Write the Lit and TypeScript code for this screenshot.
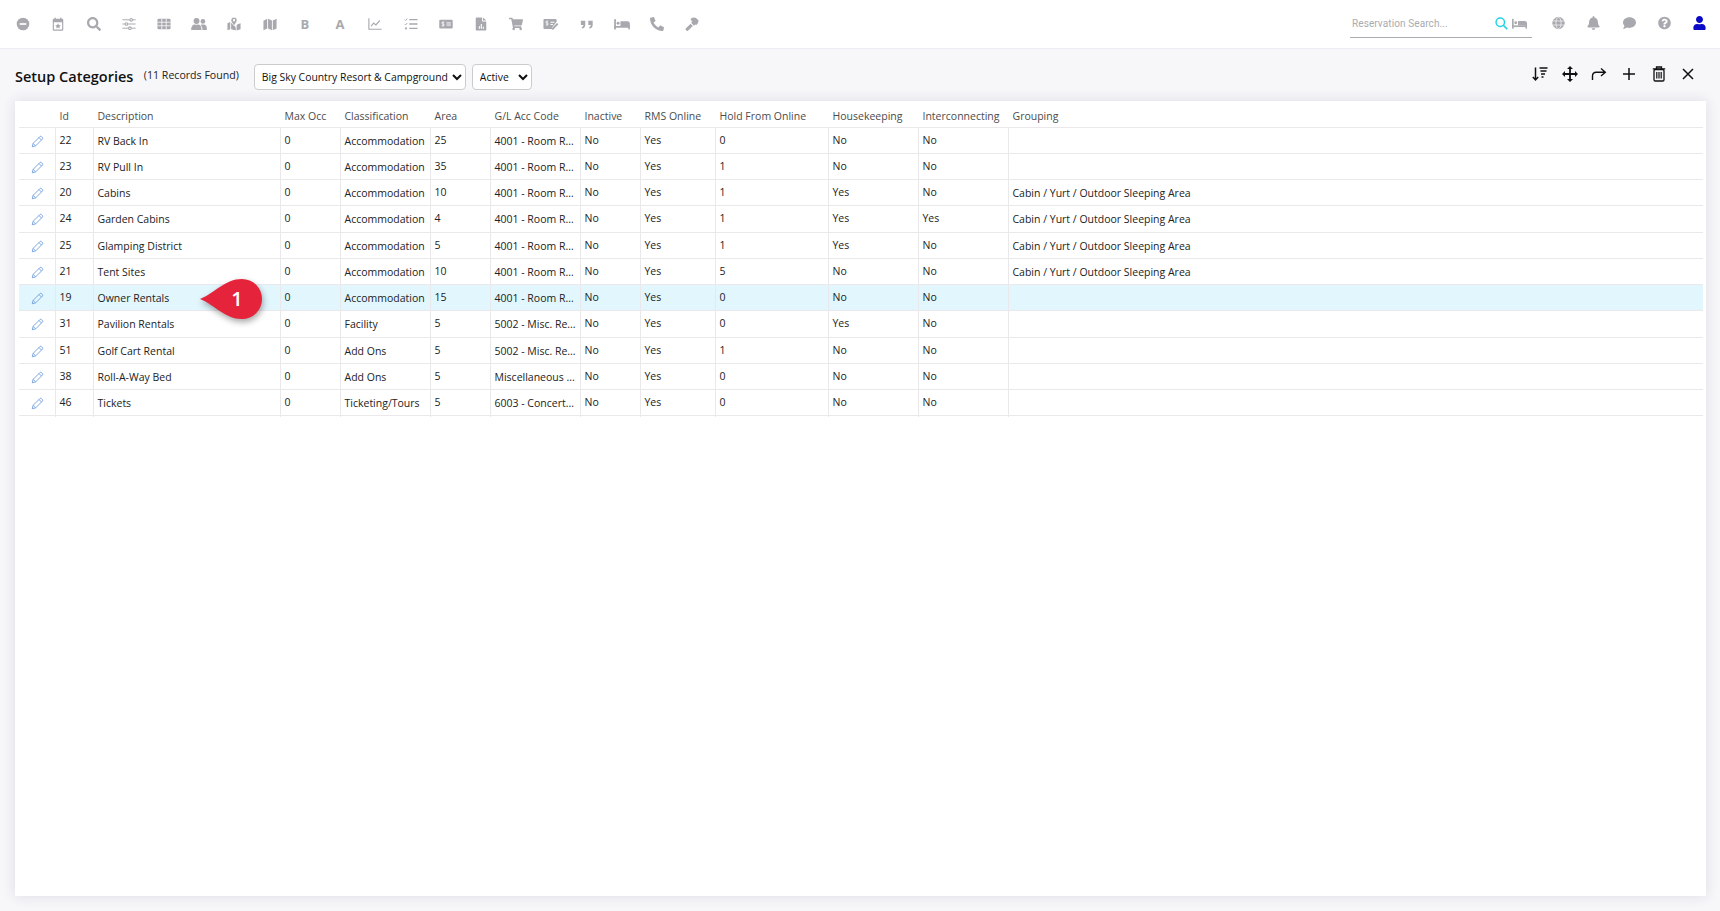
import { LitElement, html, css, svg } from "lit";
import { customElement } from "lit/decorators.js";

const F = (d: string, vb = "0 0 512 512") => svg`<svg viewBox=${vb} class="ic"><path fill="currentColor" d=${d}></path></svg>`;
const G = (inner: unknown) => svg`<svg viewBox="0 0 16 16" class="ic">${inner}</svg>`;

const P = {
  search: "M505 442.7L405.3 343c-4.5-4.5-10.6-7-17-7H372c27.6-35.3 44-79.7 44-128C416 93.1 322.9 0 208 0S0 93.1 0 208s93.1 208 208 208c48.3 0 92.7-16.4 128-44v16.3c0 6.4 2.5 12.5 7 17l99.7 99.7c9.4 9.4 24.6 9.4 33.9 0l28.3-28.3c9.4-9.4 9.4-24.6.1-34zM208 336c-70.7 0-128-57.2-128-128 0-70.7 57.2-128 128-128 70.7 0 128 57.2 128 128 0 70.7-57.2 128-128 128z",
  user: "M224 256c70.7 0 128-57.3 128-128S294.7 0 224 0 96 57.3 96 128s57.3 128 128 128zm89.6 32h-16.7c-22.2 10.2-46.9 16-72.9 16s-50.6-5.8-72.9-16h-16.7C60.2 288 0 348.2 0 422.4V464c0 26.5 21.5 48 48 48h352c26.5 0 48-21.5 48-48v-41.6c0-74.2-60.2-134.4-134.4-134.4z",
  bell: "M224 512c35.32 0 63.97-28.65 63.97-64H160.03c0 35.35 28.65 64 63.97 64zm215.39-149.71c-19.32-20.76-55.47-51.99-55.47-154.29 0-77.7-54.48-139.9-127.94-155.16V32c0-17.67-14.32-32-31.98-32s-31.98 14.33-31.98 32v20.84C118.56 68.1 64.08 130.3 64.08 208c0 102.3-36.15 133.53-55.47 154.29-6 6.45-8.66 14.16-8.61 21.71.11 16.4 12.98 32 32.1 32h383.8c19.12 0 32-15.6 32.1-32 .05-7.55-2.61-15.27-8.61-21.71z",
  comment: "M256 32C114.6 32 0 125.1 0 240c0 49.6 21.4 95 57 130.7C44.5 421.1 2.7 466 2.2 466.5c-2.2 2.3-2.8 5.7-1.5 8.7S4.8 480 8 480c66.3 0 116-31.8 140.6-51.4 32.7 12.3 69 19.4 107.4 19.4 141.4 0 256-93.1 256-208S397.4 32 256 32z",
  question: "M504 256c0 136.997-111.043 248-248 248S8 392.997 8 256C8 119.083 119.043 8 256 8s248 111.083 248 248zM262.655 90c-54.497 0-89.255 22.957-116.549 63.758-3.536 5.286-2.353 12.415 2.715 16.258l34.699 26.31c5.205 3.947 12.621 3.008 16.665-2.122 17.864-22.658 30.113-35.797 57.303-35.797 20.429 0 45.698 13.148 45.698 32.958 0 14.976-12.363 22.667-32.534 33.976C247.128 238.528 216 254.941 216 296v4c0 6.627 5.373 12 12 12h56c6.627 0 12-5.373 12-12v-1.333c0-28.462 83.186-29.647 83.186-106.667 0-58.002-60.165-102-116.531-102zM256 338c-25.365 0-46 20.635-46 46 0 25.364 20.635 46 46 46s46-20.636 46-46c0-25.365-20.635-46-46-46z",
  cart: "M528.12 301.319l47.273-208C578.806 78.301 567.391 64 551.99 64H159.208l-9.166-44.81C147.758 8.021 137.93 0 126.529 0H24C10.745 0 0 10.745 0 24v16c0 13.255 10.745 24 24 24h69.883l70.248 343.435C147.325 417.1 136 435.222 136 456c0 30.928 25.072 56 56 56s56-25.072 56-56c0-15.674-6.447-29.835-16.824-40h209.647C430.447 426.165 424 440.326 424 456c0 30.928 25.072 56 56 56s56-25.072 56-56c0-22.172-12.888-41.332-31.579-50.405l5.517-24.276c3.413-15.018-8.002-29.319-23.403-29.319H218.117l-6.545-32h293.145c11.206 0 20.92-7.754 23.403-18.681z",
  phone: "M493.4 24.6l-104-24c-11.3-2.6-22.9 3.3-27.5 13.9l-48 112c-4.2 9.8-1.4 21.3 6.9 28l60.6 49.6c-36 76.7-98.9 140.5-177.2 177.2l-49.6-60.6c-6.8-8.3-18.2-11.1-28-6.9l-112 48C3.9 366.5-2 378.1.6 389.4l24 104C27.1 504.2 36.7 512 48 512c256.1 0 464-207.5 464-464 0-11.2-7.7-20.9-18.6-23.4z",
};

const bed = G(svg`<g fill="currentColor"><rect x="0" y="3" width="1.8" height="10.5" rx=".4"/><rect x="0" y="10" width="16" height="1.8"/><rect x="14.4" y="9" width="1.6" height="4.5" rx=".4"/><circle cx="4" cy="7.2" r="1.5"/><path d="M6.4 5.2h7.2a2.4 2.4 0 0 1 2.4 2.4V10H6.4z"/></g>`);

const navIcons: unknown[] = [
  G(svg`<circle cx="8" cy="8" r="7.2" fill="currentColor"/><path d="M4.2 8h7.6" stroke="#fff" stroke-width="1.9"/><path d="M8 6.6v2.800" stroke="#fff" stroke-width=".7" opacity=".6"/>`),
  G(svg`<g fill="currentColor"><rect x="4" y=".5" width="1.5" height="3" rx=".5"/><rect x="10.5" y=".5" width="1.5" height="3" rx=".5"/><path fill-rule="evenodd" d="M3.2 2h9.600a1.200 1.200 0 0 1 1.200 1.200v11.400a1.200 1.200 0 0 1-1.200 1.200H3.200a1.200 1.200 0 0 1-1.200-1.200V3.200A1.200 1.200 0 0 1 3.200 2zM3.300 6v8.400h9.400V6z"/><path d="M8 7.200l1 2 2.100.3-1.500 1.500.4 2.100L8 12.100l-2 1 .4-2.100-1.500-1.500 2.100-.3z"/></g>`),
  F(P.search),
  G(svg`<g stroke="currentColor" stroke-width="1.100" fill="none"><path d="M.5 3.200h15M.5 8h15M.5 12.800h15"/><g fill="#fff" stroke-width="1.200"><circle cx="10.500" cy="3.200" r="1.500"/><circle cx="5" cy="8" r="1.500"/><circle cx="9" cy="12.800" r="1.500"/></g></g>`),
  G(svg`<rect x=".5" y="2" width="15" height="12" rx="1.200" fill="currentColor"/><path d="M.5 6h15M.5 10h15M5.500 2v12M10.500 2v12" stroke="#fff" stroke-width=".9"/>`),
  svg`<svg viewBox="0 0 16 16" class="ic" style="overflow:visible;transform:scale(1.12)"><g fill="currentColor"><circle cx="5.500" cy="5" r="3"/><circle cx="12" cy="5.400" r="2.400"/><path d="M0 13.200c0-3 2-4.700 3.500-4.700h.6c.6.300 1.800.300 2.600 0h.5c1.700 0 3.300 1.700 3.300 4.700v.8H0z"/><path d="M11.500 14c0-2-.6-3.800-1.900-5 .5-.4 1-.5 1.400-.5.500.200 1.500.200 2 0 1.700 0 3 1.600 3 3.800V14z"/></g></svg>`,
  G(svg`<g fill="currentColor"><path d="M.5 7l3.200-1.300V14L.5 15.200zM11 9.500l1.200-1.300 3.300-1.200V14l-4.500 1.400zM4.700 6.500v7.600l5.300 1.300V12L7.500 8.500z"/></g><path d="M8 .3c-2 0-3.500 1.500-3.500 3.400 0 1.700 2.300 4.700 3.500 6.100 1.200-1.400 3.500-4.400 3.500-6.100C11.500 1.800 10 .3 8 .3z" fill="currentColor" stroke="#fff" stroke-width=".8"/><circle cx="8" cy="3.700" r="1.300" fill="#fff"/>`),
  G(svg`<path fill="currentColor" d="M.5 4.200L4.800 2v11L.5 15zM5.800 2l4.400 2v11l-4.400-2zM11.200 4L15.500 2v11L11.200 15z"/>`),
  "B",
  "A",
  G(svg`<path d="M1 1.500V14h14.500" fill="none" stroke="currentColor" stroke-width="1.300"/><path d="M3.500 10.500l3-3.500 2.500 2 4.500-5" fill="none" stroke="currentColor" stroke-width="1.300"/>`),
  G(svg`<g stroke="currentColor" fill="none"><path d="M6 3h9.500M6 8h9.500M6 13h9.500" stroke-width="1.600"/><path d="M.8 3l1 1 2-2.200M.8 8l1 1 2-2.200" stroke-width="1.100"/></g><circle cx="2.300" cy="13" r="1.200" fill="currentColor"/>`),
  G(svg`<rect x=".3" y="3" width="15.400" height="10" rx="1.400" fill="currentColor"/><path d="M8.500 6.800h5M8.500 9.200h5" stroke="#fff" stroke-width="1.100"/><path d="M6.100 6H4.200a1 1 0 0 0 0 2h.8a1 1 0 0 1 0 2H3M4.600 5v6" stroke="#fff" stroke-width=".8" fill="none"/>`),
  G(svg`<path fill="currentColor" fill-rule="evenodd" d="M3 .5h6.300V5H14v9.500a1 1 0 0 1-1 1H3a1 1 0 0 1-1-1v-13a1 1 0 0 1 1-1zM10.300.5L14 4h-3.700zM5.500 10.500v3h1.300v-3zM7.700 8v5.500H9V8zM10 11v2.500h1.300V11z"/>`),
  F(P.cart, "0 0 576 512"),
  svg`<svg viewBox="0 0 16 16" class="ic" style="overflow:visible;transform:scale(1.12)"><path fill="currentColor" d="M1.300 2.800h11.400a1 1 0 0 1 1 1v2L9 11.500v1.700H1.300a1 1 0 0 1-1-1V3.800a1 1 0 0 1 1-1z"/><path d="M7.500 6.200h4M7.500 8.500h2.500" stroke="#fff" stroke-width="1"/><path d="M5 5.300H3.600a.9.900 0 0 0 0 1.800h.7a.9.900 0 0 1 0 1.800H2.800M4 4.500v5.200" stroke="#fff" stroke-width=".7" fill="none"/><path d="M10.500 13.500l5-5.200-1.400-1.400-5 5.200-.3 1.700z" fill="currentColor"/></svg>`,
  G(svg`<path fill="currentColor" d="M1 4.200h5v4.800c0 2.200-1.500 3.800-3.600 4l-.4-1.700c1.200-.2 1.900-.9 1.900-2.100H1zM9.500 4.200h5v4.800c0 2.200-1.500 3.800-3.600 4l-.4-1.700c1.200-.2 1.900-.9 1.900-2.100h-2.900z"/>`),
  svg`<svg viewBox="0 0 16 16" class="ic" style="overflow:visible;transform:scale(1.12)"><g fill="currentColor"><rect x="0" y="3" width="1.800" height="10.500" rx=".4"/><rect x="0" y="10" width="16" height="1.800"/><rect x="14.400" y="9" width="1.600" height="4.500" rx=".4"/><circle cx="4" cy="7.200" r="1.500"/><path d="M6.400 5.200h7.200a2.400 2.400 0 0 1 2.400 2.400V10H6.400z"/></g></svg>`,
  svg`<svg viewBox="0 0 512 512" class="ic" style="transform:scaleX(-1)"><path fill="currentColor" d=${P.phone}></path></svg>`,
  G(svg`<path fill="currentColor" d="M8.500.8c1.700-.5 3.500-.2 4.800 1l2.500 2.600-.9 1 .3 1.300-2.300 2.300-1.300-.3-1.300 1.200L7 6.700 8.200 5.500l-.7-1.200-1.400-2zM6.400 7.800l2.500 2.500-5.600 5.300a1 1 0 0 1-1.400 0l-1-1a1 1 0 0 1 0-1.400z"/>`),
];

const rows = [
  ["22", "RV Back In", "Accommodation", "25", "4001 - Room R...", "0", "No", "No", ""],
  ["23", "RV Pull In", "Accommodation", "35", "4001 - Room R...", "1", "No", "No", ""],
  ["20", "Cabins", "Accommodation", "10", "4001 - Room R...", "1", "Yes", "No", "Cabin / Yurt / Outdoor Sleeping Area"],
  ["24", "Garden Cabins", "Accommodation", "4", "4001 - Room R...", "1", "Yes", "Yes", "Cabin / Yurt / Outdoor Sleeping Area"],
  ["25", "Glamping District", "Accommodation", "5", "4001 - Room R...", "1", "Yes", "No", "Cabin / Yurt / Outdoor Sleeping Area"],
  ["21", "Tent Sites", "Accommodation", "10", "4001 - Room R...", "5", "No", "No", "Cabin / Yurt / Outdoor Sleeping Area"],
  ["19", "Owner Rentals", "Accommodation", "15", "4001 - Room R...", "0", "No", "No", ""],
  ["31", "Pavilion Rentals", "Facility", "5", "5002 - Misc. Re...", "0", "Yes", "No", ""],
  ["51", "Golf Cart Rental", "Add Ons", "5", "5002 - Misc. Re...", "1", "No", "No", ""],
  ["38", "Roll-A-Way Bed", "Add Ons", "5", "Miscellaneous ...", "0", "No", "No", ""],
  ["46", "Tickets", "Ticketing/Tours", "5", "6003 - Concert...", "0", "No", "No", ""],
];
const heads = ["", "Id", "Description", "Max Occ", "Classification", "Area", "G/L Acc Code", "Inactive", "RMS Online", "Hold From Online", "Housekeeping", "Interconnecting", "Grouping"];

@customElement("app-root")
export class AppRoot extends LitElement {
  static styles = css`
    :host { display: flex; flex-direction: column; min-height: 100vh; background: #f7f7fa; font-family: "Open Sans", sans-serif; color: #222; }
    .ic { display: block; width: 100%; height: 100%; }
    .top { height: 48px; flex: none; background: #fff; border-bottom: 1px solid #ecedf4; box-sizing: content-box; display: flex; align-items: center; padding: 0 3px 0 5.5px; }
    .nav { display: flex; align-items: center; }
    .ni { width: 35.22px; display: flex; justify-content: center; align-items: center; color: #a7a9ae; height: 16px; }
    .ni span { display: block; width: 14px; height: 14px; }
    .ni b { font: 700 13px "Open Sans", sans-serif; line-height: 16px; }
    .search { margin-left: auto; width: 182px; height: 26px; box-sizing: border-box; margin-top: 1px; border-bottom: 1px solid #a9abaf; display: flex; align-items: center; padding: 0 5px 2px 1.5px; color: #a9abaf; font: 10px Roboto, sans-serif; }
    .search .ph { flex: 1; letter-spacing: .1px; }
    .search .s { width: 13px; height: 13px; color: #22d3e6; margin-right: 4px; }
    .search .b { width: 15px; height: 15px; color: #a9abaf; }
    .right { display: flex; margin-left: 8.6px; }
    .ri { width: 35.2px; height: 16px; display: flex; justify-content: center; color: #a7a9ae; }
    .ri span { display: block; width: 13px; height: 14px; }
    .ri.u { color: #0a0ac8; }
    .bar { flex: none; height: 52px; display: flex; align-items: center; padding: 0 17px 0 15px; }
    h1 { margin: 2px 0 0; font-size: 14.5px; font-weight: 600; color: #111; white-space: nowrap; }
    .count { font-size: 10.6px; margin-left: 10.5px; margin-top: -1px; white-space: nowrap; color: #222; }
    select { font: 10.4px "Open Sans", sans-serif; color: #111; background: #fff; border: 1px solid #ccc; border-radius: 4px; height: 26px; padding: 0 0 0 3px; margin: 4px 0 0; box-sizing: border-box; }
    .s1 { width: 212px; margin-left: 15px; }
    .s2 { width: 60.5px; margin-left: 6px; }
    .tools { margin-left: auto; display: flex; color: #111; margin-top: -3px; }
    .tools span { width: 29.6px; height: 16px; display: flex; justify-content: center; }
    .tools svg { width: 16px; height: 16px; }
    .card { flex: 1; background: #fff; margin: 0 14px 15px 15px; box-shadow: 0 0 12px rgba(60, 60, 90, .14); padding: 0 3px 0 4px; }
    .row { display: grid; grid-template-columns: 37px 38px 187px 60px 90px 60px 90px 60px 75px 113px 90px 90px 1fr; height: 26.25px; box-sizing: border-box; border-bottom: 1px solid #eae8ea; position: relative; font-size: 10.5px; align-items: stretch; }
    .hd { height: 26.6px; }
    .hd .c { border-right: 0; line-height: 31px; font-size: 10.5px; font-weight: 500; color: #4c4c4c; }
    .c { border-right: 1px solid #eae8ea; padding: 0 3px 0 3.5px; white-space: nowrap; line-height: 25px; color: #222; box-sizing: border-box; min-width: 0; }
    .c.t { line-height: 27px; }
    .c.last { border-right: 0; }
    .row.on { background: #e1f7fd; }
    .edit { padding: 0; display: flex; align-items: center; justify-content: center; color: #6f9ddb; }
    .edit svg { width: 13px; height: 13px; }
    .pin { position: absolute; left: 181px; top: -9px; width: 66px; height: 46px; pointer-events: none; }
    .pin svg { display: block; width: 100%; height: 100%; overflow: visible; filter: drop-shadow(1px 3px 3px rgba(0,0,0,.35)); }
    .pin span { position: absolute; left: 29px; top: 7px; width: 16px; text-align: center; color: #fff; font: 600 20px/32px "Open Sans", sans-serif; }
  `;

  render() {
    const st = (s: string) => html`<div class="c">${s}</div>`;
    const tx = (s: string, l = "") => html`<div class="c t ${l}">${s}</div>`;
    return html`
      <div class="top">
        <div class="nav">
          ${navIcons.map((ic) => typeof ic === "string"
            ? html`<div class="ni"><b>${ic}</b></div>`
            : html`<div class="ni"><span>${ic}</span></div>`)}
        </div>
        <div class="search">
          <span class="ph">Reservation Search...</span>
          <span class="s">${svg`<svg viewBox="0 0 16 16" class="ic"><circle cx="6.500" cy="6.500" r="5.200" fill="none" stroke="currentColor" stroke-width="1.800"/><path d="M10.500 10.500l4.500 4.500" stroke="currentColor" stroke-width="2"/></svg>`}</span>
          <span class="b">${bed}</span>
        </div>
        <div class="right">
          <div class="ri"><span>${G(svg`<g fill="none" stroke="currentColor" stroke-width="1.200"><circle cx="8" cy="8" r="7" fill="currentColor"/><g stroke="#fff" stroke-width=".8"><ellipse cx="8" cy="8" rx="3.200" ry="7"/><path d="M1 5.500h14M1 10.500h14"/></g></g>`)}</span></div>
          <div class="ri"><span>${F(P.bell, "0 0 448 512")}</span></div>
          <div class="ri"><span>${F(P.comment)}</span></div>
          <div class="ri"><span>${F(P.question)}</span></div>
          <div class="ri u"><span>${F(P.user, "0 0 448 512")}</span></div>
        </div>
      </div>
      <div class="bar">
        <h1>Setup Categories</h1>
        <span class="count">(11 Records Found)</span>
        <select class="s1"><option>Big Sky Country Resort &amp; Campground</option></select>
        <select class="s2"><option>Active</option></select>
        <div class="tools">
          <span>${G(svg`<g fill="none" stroke="currentColor"><path d="M3.500 1.500v12.500M.8 11l2.700 3 2.700-3" stroke-width="1.500"/><path d="M7.500 2h8M8.500 5h6M9 8h4M9.500 11h2" stroke-width="1.400"/></g>`)}</span>
          <span>${G(svg`<g fill="currentColor"><path d="M8 0l3 3H5zM8 16l-3-3h6zM0 8l3-3v6zM16 8l-3 3V5z"/></g><path d="M8 2v12M2 8h12" stroke="currentColor" stroke-width="1.800"/>`)}</span>
          <span>${G(svg`<path d="M1.500 14V10c0-2.300 1.500-3.800 3.800-3.800H14M10 2.500l4.300 3.700L10 10" fill="none" stroke="currentColor" stroke-width="1.400"/>`)}</span>
          <span>${G(svg`<path d="M8 2v12M2 8h12" stroke="currentColor" stroke-width="1.500"/>`)}</span>
          <span>${G(svg`<path d="M1.800 2.800h12.400M5.500 2.500V1h5v1.500" fill="none" stroke="currentColor" stroke-width="1.300"/><rect x="3" y="3.500" width="10" height="11.500" rx="1.200" fill="none" stroke="currentColor" stroke-width="1.300"/><path d="M5.800 6v6.500M8 6v6.500M10.200 6v6.500" stroke="currentColor" stroke-width="1.200"/>`)}</span>
          <span>${G(svg`<path d="M3 3l10 10M13 3L3 13" stroke="currentColor" stroke-width="1.500"/>`)}</span>
        </div>
      </div>
      <div class="card">
        <div class="row hd">${heads.map((h) => html`<div class="c">${h}</div>`)}</div>
        ${rows.map((r, i) => html`
          <div class="row ${i === 6 ? "on" : ""}">
            <div class="c edit">${svg`<svg viewBox="0 0 16 16"><path d="M2.600 10.300L10.800 2.100a1.600 1.600 0 0 1 2.300 0l.8.800a1.600 1.600 0 0 1 0 2.300L5.700 13.400 1.500 14.500zM9.800 3.100l3.100 3.100M2.800 10.500l2.700 2.700" fill="none" stroke="currentColor" stroke-width="1.100"/></svg>`}</div>
            ${st(r[0])}${tx(r[1])}${st("0")}${tx(r[2])}${st(r[3])}${tx(r[4])}${st("No")}${st("Yes")}${st(r[5])}${st(r[6])}${st(r[7])}${tx(r[8], "last")}
            ${i === 6 ? html`<div class="pin">${svg`<svg viewBox="0 0 66 46"><path fill="#e5233a" d="M0 23C15 17 25 3 42 3a20 20 0 0 1 0 40C25 43 15 29 0 23z"/></svg>`}<span>1</span></div>` : ""}
          </div>`)}
      </div>
    `;
  }
}
